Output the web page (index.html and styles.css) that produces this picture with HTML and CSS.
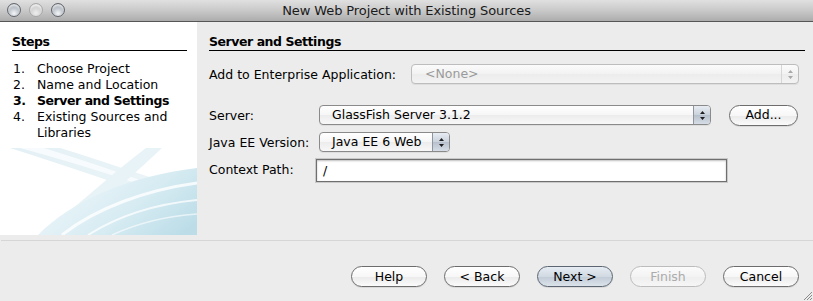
FILE: index.html
```html
<!DOCTYPE html>
<html>
<head>
<meta charset="utf-8">
<link rel="stylesheet" href="styles.css">
</head>
<body>
<div class="window">
  <div class="titlebar">
    <div class="lights">
      <span class="light"></span><span class="light dim"></span><span class="light"></span>
    </div>
    <div class="title">New Web Project with Existing Sources</div>
    <div></div>
  </div>
  <div class="main">
    <aside class="steps">
      <h2 class="panel-title">Steps</h2>
      <ol class="step-list">
        <li><span class="num">1.</span><span>Choose Project</span></li>
        <li><span class="num">2.</span><span>Name and Location</span></li>
        <li class="current"><span class="num">3.</span><span>Server and Settings</span></li>
        <li><span class="num">4.</span><span>Existing Sources and Libraries</span></li>
      </ol>
      <svg class="swoosh" width="197" height="87" viewBox="0 0 197 87">
        <defs>
          <linearGradient id="arc" x1="0" y1="0.3" x2="1" y2="0.8">
            <stop offset="0" stop-color="#f0f8fb"/>
            <stop offset="0.6" stop-color="#d6ebf2"/>
            <stop offset="1" stop-color="#bcdde8"/>
          </linearGradient>
          <linearGradient id="band" x1="0" y1="0" x2="1" y2="0">
            <stop offset="0" stop-color="#e3f0f5"/>
            <stop offset="1" stop-color="#edf6f9"/>
          </linearGradient>
        </defs>
        <path d="M10 0 L60 0 C100 12 150 30 197 44 L197 62 C140 44 80 22 10 0Z" fill="url(#band)"/>
        <path d="M20 0 L44 0 C90 14 140 32 197 52 L197 56 C140 36 80 16 20 0Z" fill="#f7fbfd"/>
        <path d="M146 0 L162 0 C130 30 95 60 68 87 L44 87 C75 58 110 28 146 0Z" fill="#e8f3f7"/>
        <path d="M38 87 C72 52 130 28 197 20 L197 87Z" fill="url(#arc)"/>
        <path d="M62 87 C96 60 146 42 197 35" stroke="#ffffff" stroke-width="3" fill="none" opacity=".8"/>
        <path d="M88 87 C118 68 156 56 197 52" stroke="#ffffff" stroke-width="2" fill="none" opacity=".75"/>
        <path d="M112 87 C140 74 168 68 197 66" stroke="#ffffff" stroke-width="1.5" fill="none" opacity=".6"/>
      </svg>
    </aside>
    <section class="settings">
      <h2 class="panel-title">Server and Settings</h2>
      <div class="ent-row">
        <span class="ent-label">Add to Enterprise Application:</span>
        <div class="popup disabled">
          <span class="popup-text">&lt;None&gt;</span>
          <span class="arrows">
            <svg width="7" height="11" viewBox="0 0 7 11"><path d="M3.5 1 L6 4 L1 4Z M1 7 L6 7 L3.5 10Z"/></svg>
          </span>
        </div>
      </div>
      <div class="form">
        <span class="label">Server:</span>
        <div class="popup server">
          <span class="popup-text">GlassFish Server 3.1.2</span>
          <span class="arrows">
            <svg width="7" height="11" viewBox="0 0 7 11"><path d="M3.5 1 L6 4 L1 4Z M1 7 L6 7 L3.5 10Z"/></svg>
          </span>
        </div>
        <button class="btn add">Add...</button>

        <span class="label">Java EE Version:</span>
        <div class="popup javaee">
          <span class="popup-text">Java EE 6 Web</span>
          <span class="arrows">
            <svg width="7" height="11" viewBox="0 0 7 11"><path d="M3.5 1 L6 4 L1 4Z M1 7 L6 7 L3.5 10Z"/></svg>
          </span>
        </div>
        <span></span>

        <span class="label">Context Path:</span>
        <div class="textfield">/</div>
        <span></span>
      </div>
    </section>
  </div>
  <div class="separator"></div>
  <div class="footer">
    <button class="btn">Help</button>
    <button class="btn">&lt; Back</button>
    <button class="btn default">Next &gt;</button>
    <button class="btn off">Finish</button>
    <button class="btn">Cancel</button>
  </div>
  <svg class="grip" width="12" height="12" viewBox="0 0 12 12">
    <path d="M11 3 L3 11 M11 6 L6 11 M11 9 L9 11" stroke="#8a8a8a" stroke-width="1"/>
  </svg>
</div>
</body>
</html>
```
FILE: styles.css
```css
* { box-sizing: border-box; }
html, body { margin: 0; padding: 0; }
body {
  width: 813px;
  height: 301px;
  overflow: hidden;
  background: #ececec;
  font-family: "DejaVu Sans", "Lucida Grande", sans-serif;
  font-size: 12.5px;
  color: #000;
}
.window {
  position: relative;
  width: 813px;
  height: 301px;
  display: flex;
  flex-direction: column;
}
.titlebar {
  height: 22px;
  flex: none;
  display: grid;
  grid-template-columns: 1fr auto 1fr;
  align-items: center;
  background: linear-gradient(#e0e0e0, #c9c9c9 50%, #acacac);
  border-bottom: 1px solid #565656;
}
.lights {
  display: flex;
  gap: 8px;
  padding-left: 7px;
  padding-bottom: 2px;
}
.light {
  width: 14px;
  height: 14px;
  border-radius: 50%;
  border: 1px solid #62676d;
  background: radial-gradient(circle at 50% 78%, #f4f6f8 0, #c0c6cd 45%, #8a9199 100%);
  box-shadow: inset 0 2px 2px rgba(255,255,255,0.7);
}
.light.dim {
  border-color: #a8a8a8;
  background: radial-gradient(circle at 50% 75%, #eeeeee 0, #d2d2d2 50%, #bdbdbd 100%);
}
.title {
  font-size: 13px;
  color: #1a1a1a;
  padding-bottom: 1px;
  letter-spacing: -0.1px;
}
.main {
  height: 213px;
  flex: none;
  display: flex;
}
.steps {
  width: 197px;
  background: #fff;
  display: flex;
  flex-direction: column;
  padding-top: 12px;
}
.panel-title {
  margin: 0;
  font-size: 12.5px;
  font-weight: bold;
  line-height: 16px;
  letter-spacing: -0.45px;
  border-bottom: 1px solid #000;
}
.steps .panel-title {
  margin: 0 10px 0 12px;
}
.step-list {
  list-style: none;
  margin: 10px 10px 0 0;
  padding: 0;
  line-height: 16px;
}
.step-list li {
  display: flex;
}
.step-list .num {
  width: 37px;
  flex: none;
  padding-left: 13px;
}
.step-list li.current { font-weight: bold; letter-spacing: -0.45px; }
.swoosh {
  margin-top: auto;
  display: block;
}
.settings {
  flex: 1;
  padding: 12px 8px 0 12px;
}
.ent-row {
  margin-top: 13px;
  display: flex;
  align-items: center;
  height: 20px;
}
.ent-label {
  width: 202px;
  flex: none;
  white-space: nowrap;
}
.ent-row .popup {
  flex: 1;
  margin-right: 6px;
}
.popup {
  height: 20px;
  border: 1px solid #8a8a8a;
  border-radius: 4px;
  background: linear-gradient(#ffffff, #f6f6f6 50%, #ececec 51%, #f8f8f8);
  display: flex;
  align-items: center;
  padding-left: 12px;
  box-shadow: 0 1px 0 rgba(0,0,0,0.06);
  overflow: hidden;
}
.popup-text { line-height: 16px; white-space: nowrap; }
.arrows {
  margin-left: auto;
  width: 17px;
  align-self: stretch;
  border-left: 1px solid #8e959e;
  background: linear-gradient(#e8edf3, #c9d1db 50%, #b6c0cc 51%, #d6dde6);
  display: flex;
  align-items: center;
  justify-content: center;
}
.arrows svg { fill: #1f1f1f; display: block; }
.popup.disabled {
  border-color: #bdbdbd;
  background: linear-gradient(#fbfbfb, #f2f2f2 50%, #ececec 51%, #f3f3f3);
  color: #9a9a9a;
  padding-left: 13px;
}
.popup.disabled .arrows {
  background: transparent;
  border-left-color: #d6d6d6;
}
.popup.disabled .arrows svg { fill: #a8a8a8; }
.form {
  margin-top: 21px;
  display: grid;
  grid-template-columns: 110px 392px auto;
  grid-auto-rows: 20px;
  row-gap: 7px;
  align-items: center;
}
.form .popup.javaee {
  width: 131px;
}
.textfield {
  margin-left: -3px;
  width: 411px;
  height: 23px;
  align-self: start;
  background: #fff;
  border: 1px solid #6f6f6f;
  box-shadow: 0 0 0 1px #c9c9c9, inset 0 1px 2px rgba(0,0,0,0.25);
  padding: 2px 6px;
  line-height: 17px;
}
.btn {
  width: 76px;
  height: 21px;
  border: 1px solid #6d6d6d;
  border-radius: 11px;
  background: linear-gradient(#ffffff, #f7f7f7 50%, #eaeaea 51%, #fbfbfb);
  font-family: inherit;
  font-size: 12.5px;
  color: #000;
  padding: 0;
  line-height: 18px;
  box-shadow: 0 1px 0 rgba(0,0,0,0.08);
}
.btn.add {
  width: 69px;
  margin-left: 18px;
}
.btn.default {
  border-color: #5b6672;
  background: linear-gradient(#e6ecf2, #d1d9e2 50%, #c1cbd6 51%, #dbe2ea);
}
.btn.off {
  border-color: #bcbcbc;
  color: #ababab;
  background: linear-gradient(#fbfbfb, #f3f3f3 50%, #eeeeee 51%, #f6f6f6);
  box-shadow: none;
}
.separator {
  margin-top: 5px;
  height: 1px;
  margin-left: 1px;
  background: #d6d6d6;
  flex: none;
}
.footer {
  margin-top: 25px;
  display: flex;
  justify-content: flex-end;
  gap: 17px;
  padding-right: 14px;
}
.grip {
  position: absolute;
  right: 0;
  bottom: 0;
}
```
